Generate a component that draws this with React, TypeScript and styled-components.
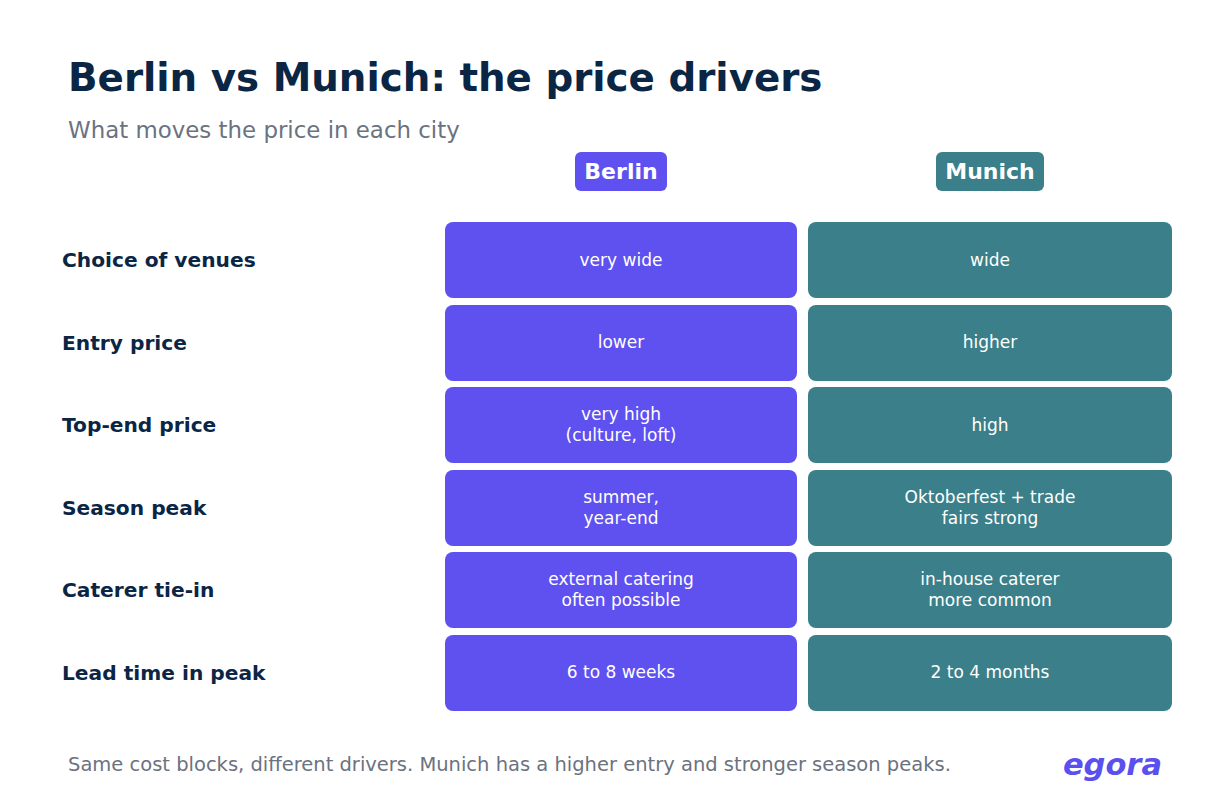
import React from "react";
import styled, { createGlobalStyle } from "styled-components";

const Global = createGlobalStyle`
  html, body { margin: 0; padding: 0; background: #ffffff; }
  body { font-family: "DejaVu Sans", "Liberation Sans", sans-serif; width: 1230px; height: 800px; overflow: hidden; }
`;

const Page = styled.div`
  width: 1230px;
  height: 800px;
  box-sizing: border-box;
  padding: 56px 58px 0 62px;
  display: flex;
  flex-direction: column;
`;

const Title = styled.h1`
  margin: 0 0 0 6px;
  font-weight: 700;
  font-size: 38.8px;
  line-height: 44px;
  color: #0b2545;
`;

const Subtitle = styled.div`
  margin: 17px 0 0 6px;
  font-size: 22.9px;
  line-height: 27px;
  color: #6b7280;
`;

const Grid = styled.div`
  display: grid;
  grid-template-columns: 372px 352px 364px;
  column-gap: 11px;
  row-gap: 6.5px;
  margin-top: 8px;
`;

const HeadCell = styled.div`
  display: flex;
  justify-content: center;
  align-items: flex-start;
  height: 63.5px;
`;

const Pill = styled.div<{ $bg: string }>`
  background: ${(p) => p.$bg};
  color: #ffffff;
  font-weight: 700;
  font-size: 22px;
  line-height: 39px;
  padding: 0 9.5px;
  border-radius: 6px;
`;

const Label = styled.div`
  display: flex;
  align-items: center;
  font-weight: 700;
  font-size: 20.2px;
  color: #0b2545;
`;

const Cell = styled.div<{ $bg: string }>`
  background: ${(p) => p.$bg};
  height: 76px;
  border-radius: 8px;
  display: flex;
  align-items: center;
  justify-content: center;
  text-align: center;
  color: #ffffff;
  font-size: 17px;
  line-height: 21px;
  white-space: pre-line;
`;

const Footer = styled.div`
  display: flex;
  justify-content: space-between;
  align-items: center;
  margin: 36px 0 0 6px;
`;

const FootNote = styled.div`
  font-size: 19.5px;
  color: #6b7280;
`;

const Logo = styled.div`
  font-weight: 700;
  font-style: italic;
  font-size: 30.5px;
  color: #5b4ff0;
  margin-right: 10px;
`;

const BERLIN = "#5f51ef";
const MUNICH = "#3a7f89";

const rows: [string, string, string][] = [
  ["Choice of venues", "very wide", "wide"],
  ["Entry price", "lower", "higher"],
  ["Top-end price", "very high\n(culture, loft)", "high"],
  ["Season peak", "summer,\nyear-end", "Oktoberfest + trade\nfairs strong"],
  ["Caterer tie-in", "external catering\noften possible", "in-house caterer\nmore common"],
  ["Lead time in peak", "6 to 8 weeks", "2 to 4 months"],
];

export default function App() {
  return (
    <>
      <Global />
      <Page>
        <Title>Berlin vs Munich: the price drivers</Title>
        <Subtitle>What moves the price in each city</Subtitle>
        <Grid>
          <div />
          <HeadCell>
            <Pill $bg={BERLIN}>Berlin</Pill>
          </HeadCell>
          <HeadCell>
            <Pill $bg={MUNICH}>Munich</Pill>
          </HeadCell>
          {rows.map(([l, b, m]) => (
            <React.Fragment key={l}>
              <Label>{l}</Label>
              <Cell $bg={BERLIN}>{b}</Cell>
              <Cell $bg={MUNICH}>{m}</Cell>
            </React.Fragment>
          ))}
        </Grid>
        <Footer>
          <FootNote>
            Same cost blocks, different drivers. Munich has a higher entry and stronger season peaks.
          </FootNote>
          <Logo>egora</Logo>
        </Footer>
      </Page>
    </>
  );
}
